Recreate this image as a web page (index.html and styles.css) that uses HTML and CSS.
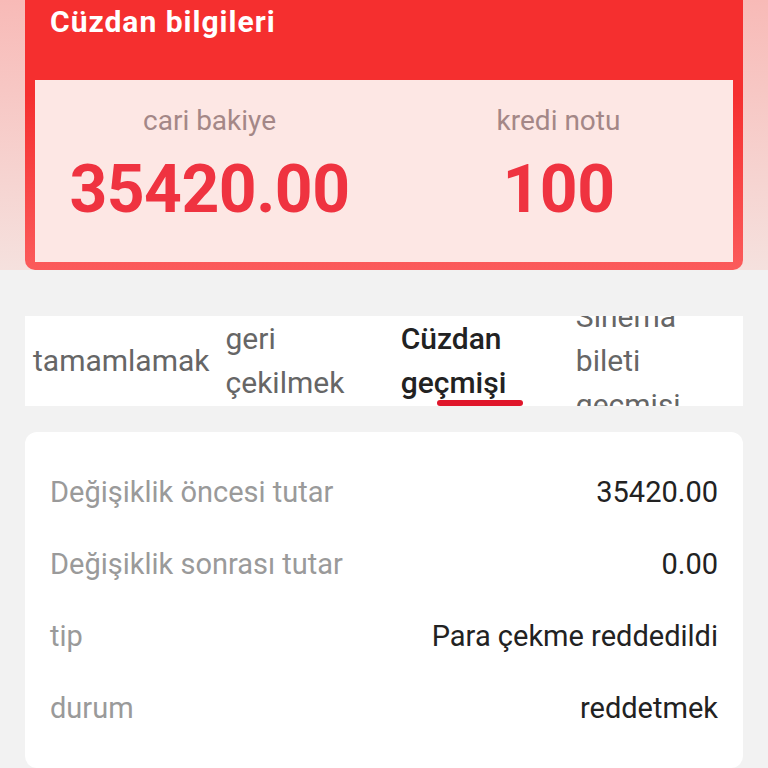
FILE: index.html
```html
<!DOCTYPE html>
<html lang="tr">
<head>
<meta charset="UTF-8">
<meta name="viewport" content="width=device-width, initial-scale=1.0">
<title>Cüzdan bilgileri</title>
<link rel="stylesheet" href="styles.css">
</head>
<body>

<div class="hero">
    <div class="wallet">
        <h1 class="wallet-title">Cüzdan bilgileri</h1>
        <div class="wallet-stats">
            <div class="stat">
                <p class="stat-label">cari bakiye</p>
                <p class="stat-value">35420.00</p>
            </div>
            <div class="stat">
                <p class="stat-label">kredi notu</p>
                <p class="stat-value">100</p>
            </div>
        </div>
    </div>
</div>

<nav class="tabs">
    <div class="tab">tamamlamak</div>
    <div class="tab">geri çekilmek</div>
    <div class="tab active">Cüzdan geçmişi</div>
    <div class="tab">Sinema bileti geçmişi</div>
</nav>

<div class="detail-card">
    <div class="row">
        <span class="row-label">Değişiklik öncesi tutar</span>
        <span class="row-value">35420.00</span>
    </div>
    <div class="row">
        <span class="row-label">Değişiklik sonrası tutar</span>
        <span class="row-value">0.00</span>
    </div>
    <div class="row">
        <span class="row-label">tip</span>
        <span class="row-value">Para çekme reddedildi</span>
    </div>
    <div class="row">
        <span class="row-label">durum</span>
        <span class="row-value">reddetmek</span>
    </div>
</div>

</body>
</html>
```

FILE: styles.css
```css
body {
    font-family: Roboto, "Noto Sans", Arial, sans-serif;
    margin: 0;
    padding: 0;
    background-color: #f2f2f2;
    overflow: hidden;
}
p, h1 {
    margin: 0;
}

/* top wallet block */
.hero {
    height: 270px;
    padding: 0 25px;
    background: linear-gradient(to bottom, #f8bab7, #f5e1de);
}
.wallet {
    height: 270px;
    box-sizing: border-box;
    display: flex;
    flex-direction: column;
    padding: 0 10px 8px;
    border-radius: 0 0 10px 10px;
    background: linear-gradient(to bottom, #f52f2f 35%, #fb5b5b);
}
.wallet-title {
    height: 80px;
    padding-left: 15px;
    font-size: 30px;
    line-height: 44px;
    font-weight: 700;
    color: #fff;
    letter-spacing: 1px;
}
.wallet-stats {
    flex: 1;
    display: flex;
    background-color: #fde7e4;
}
.stat {
    flex: 1;
    padding-top: 24px;
    text-align: center;
}
.stat-label {
    font-size: 28px;
    line-height: 34px;
    color: #a48787;
}
.stat-value {
    margin-top: 12px;
    font-size: 66px;
    line-height: 80px;
    font-weight: 700;
    color: #ef3340;
    letter-spacing: -0.5px;
}

/* tabs */
.tabs {
    display: flex;
    height: 90px;
    margin: 46px 25px 0;
    background-color: #fff;
    overflow: hidden;
}
.tab {
    flex: 1 1 0;
    position: relative;
    display: flex;
    align-items: center;
    padding: 0 8px;
    font-size: 30px;
    line-height: 44px;
    color: #666;
}
.tab.active {
    color: #222;
    font-weight: 500;
}
.tab.active::after {
    content: "";
    position: absolute;
    left: 50%;
    bottom: 0;
    width: 86px;
    height: 6px;
    margin-left: -43px;
    border-radius: 3px;
    background-color: #e0162b;
}

/* details */
.detail-card {
    margin: 26px 25px 0;
    padding: 24px 25px;
    background-color: #fff;
    border-radius: 12px;
}
.row {
    display: flex;
    justify-content: space-between;
    align-items: center;
    height: 72px;
    font-size: 29px;
}
.row-label {
    color: #9a9a9a;
}
.row-value {
    color: #222;
}
```
